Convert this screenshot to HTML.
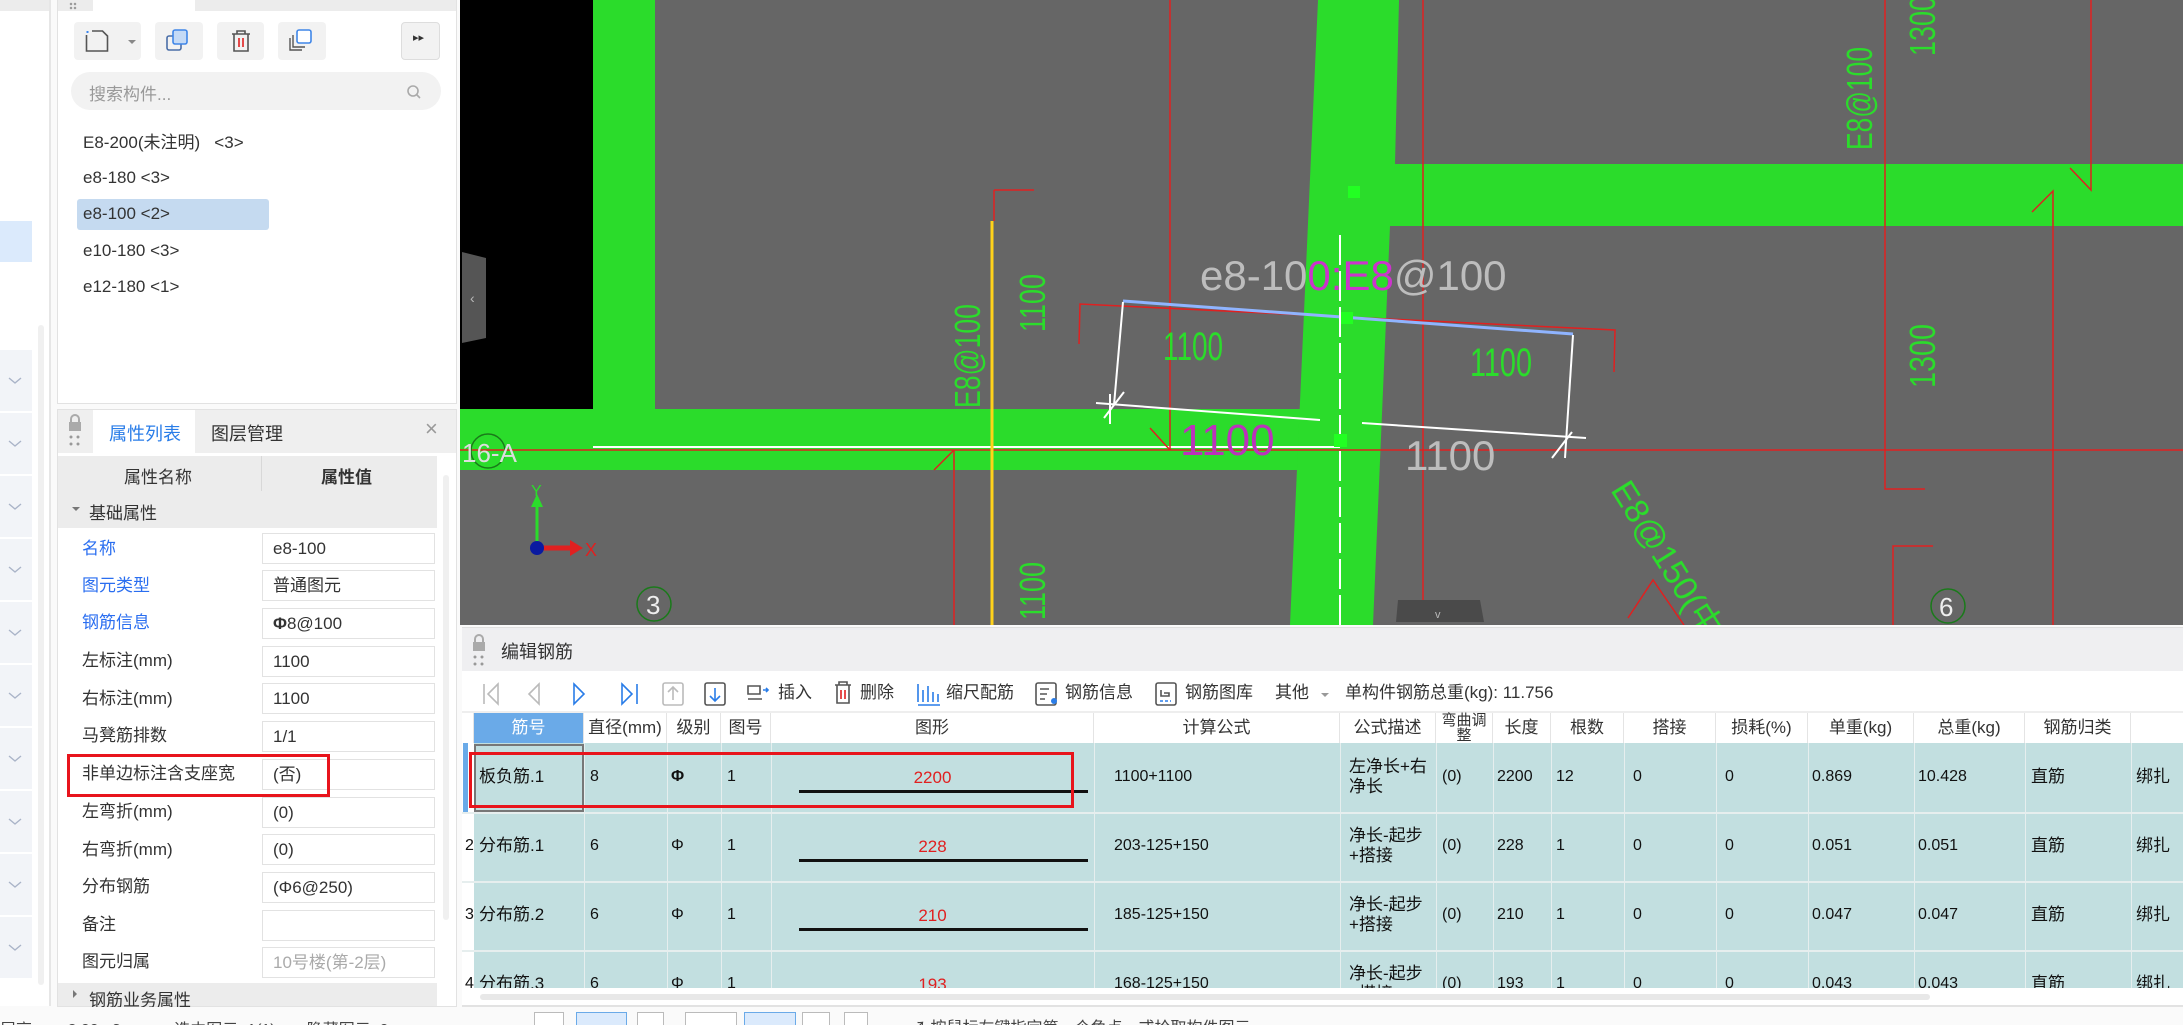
<!DOCTYPE html>
<html><head><meta charset="utf-8">
<style>
*{margin:0;padding:0;box-sizing:border-box}
body{width:2183px;height:1025px;overflow:hidden;background:#fafafa;position:relative;font-family:"Liberation Sans","Noto Sans CJK SC",sans-serif;color:#333}
.a{position:absolute}
.t{position:absolute;white-space:nowrap}
.chev{position:absolute;left:8px;width:14px;height:8px}
.btn{position:absolute;background:#f2f2f2;border-radius:4px}
.item{position:absolute;left:83px;font-size:17px;color:#333;line-height:20px}
.pl{position:absolute;left:82px;font-size:17px;color:#333;line-height:20px}
.pl.b{color:#2a6ef0}
.pv{position:absolute;left:262px;width:173px;height:31px;border:1px solid #e2e2e2;background:#fff;font-size:17px;padding-left:10px;line-height:29px}
.th{position:absolute;top:713px;height:30px;font-size:17px;color:#333;text-align:center;line-height:30px;border-right:1px solid #e4e4e4;background:#fff}
.cell{position:absolute;font-size:16px;color:#111;line-height:20px;white-space:nowrap}
.tb{position:absolute;top:682px;font-size:17px;color:#333;white-space:nowrap;line-height:22px}
</style></head><body>

<div class="a" style="left:0;top:0;width:50px;height:1006px;background:#fff"></div>
<div class="a" style="left:0;top:0;width:50px;height:11px;background:#ececec"></div>
<div class="a" style="left:0;top:221px;width:32px;height:41px;background:#dbeafc"></div>
<div class="a" style="left:38px;top:325px;width:6px;height:660px;background:#f0f0f0;border-radius:3px"></div>
<div class="a" style="left:49px;top:0;width:2px;height:1006px;background:#e6e6e6"></div>
<div id="sb"></div>

<div class="a" style="left:57px;top:0;width:400px;height:404px;background:#fff;border:1px solid #e2e2e2"></div>
<div class="a" style="left:58px;top:0;width:398px;height:11px;background:#ececec"></div>
<div class="a" style="left:93px;top:0;width:102px;height:11px;background:#fff"></div>
<div class="a" style="left:69px;top:2px;width:8px;height:8px;background:radial-gradient(circle,#999 1px,transparent 1.5px) 0 0/4px 4px"></div>
<div class="btn" style="left:74px;top:22px;width:67px;height:38px"></div>
<svg class="a" style="left:84px;top:28px" width="30" height="26"><rect x="2.5" y="3" width="2" height="2" fill="#3a86f0"/><path d="M2.5 7v16h21V8l-5-5H8" fill="none" stroke="#555" stroke-width="1.6"/></svg>
<div class="a" style="left:128px;top:40px;border:4px solid transparent;border-top-color:#888"></div>
<div class="btn" style="left:155px;top:22px;width:48px;height:38px"></div>
<svg class="a" style="left:165px;top:28px" width="28" height="26"><rect x="2" y="8" width="14" height="14" rx="2" fill="none" stroke="#4a6ea8" stroke-width="1.6"/><rect x="8" y="2" width="14" height="14" rx="2" fill="#c4daf6" stroke="#3f86e8" stroke-width="1.6"/></svg>
<div class="btn" style="left:217px;top:22px;width:47px;height:38px"></div>
<svg class="a" style="left:228px;top:28px" width="26" height="26"><path d="M4 6h18M9 6V3h8v3M6 6v17h14V6" fill="none" stroke="#555" stroke-width="1.6"/><path d="M11 10v9M15 10v9" stroke="#e02020" stroke-width="1.6"/></svg>
<div class="btn" style="left:278px;top:22px;width:48px;height:38px"></div>
<svg class="a" style="left:288px;top:28px" width="28" height="26"><path d="M2 10v12h12M5 7v12h12" fill="none" stroke="#555" stroke-width="1.4"/><rect x="9" y="2" width="14" height="13" rx="2" fill="#fff" stroke="#3f86e8" stroke-width="1.6"/></svg>
<div class="btn" style="left:401px;top:22px;width:39px;height:38px;border:1px solid #ddd"></div>
<div class="t" style="left:413px;top:31px;font-size:11px;color:#333">&#9656;&#9656;</div>
<div class="a" style="left:71px;top:72px;width:370px;height:38px;background:#f2f2f2;border-radius:19px"></div>
<div class="t" style="left:89px;top:80px;font-size:17px;color:#999">搜索构件...</div>
<svg class="a" style="left:406px;top:84px" width="16" height="16"><circle cx="7" cy="7" r="5" fill="none" stroke="#aaa" stroke-width="1.6"/><path d="M11 11l3 3" stroke="#aaa" stroke-width="1.6"/></svg>
<div class="a" style="left:77px;top:199px;width:192px;height:31px;background:#c5daf0;border-radius:3px"></div>
<div class="item" style="top:133px">E8-200(未注明)&nbsp;&nbsp;&nbsp;&lt;3&gt;</div>
<div class="item" style="top:168px">e8-180 &lt;3&gt;</div>
<div class="item" style="top:204px">e8-100 &lt;2&gt;</div>
<div class="item" style="top:241px">e10-180 &lt;3&gt;</div>
<div class="item" style="top:277px">e12-180 &lt;1&gt;</div>

<div class="a" style="left:57px;top:409px;width:400px;height:598px;background:#fff;border:1px solid #e2e2e2"></div>
<div class="a" style="left:58px;top:410px;width:398px;height:43px;background:#efefef"></div>
<div class="a" style="left:93px;top:410px;width:102px;height:43px;background:#fff"></div>
<svg class="a" style="left:68px;top:414px" width="14" height="34"><path d="M3 8V5a4 4 0 0 1 8 0v3" fill="none" stroke="#aaa" stroke-width="2"/><rect x="1" y="8" width="12" height="9" fill="#aaa"/><circle cx="3" cy="23" r="1.5" fill="#999"/><circle cx="10" cy="23" r="1.5" fill="#999"/><circle cx="3" cy="30" r="1.5" fill="#999"/><circle cx="10" cy="30" r="1.5" fill="#999"/></svg>
<div class="t" style="left:109px;top:420px;font-size:18px;color:#2a7de8">属性列表</div>
<div class="t" style="left:211px;top:420px;font-size:18px;color:#333">图层管理</div>
<div class="t" style="left:425px;top:416px;font-size:22px;color:#999">×</div>
<div class="a" style="left:58px;top:456px;width:379px;height:35px;background:#ececec"></div>
<div class="a" style="left:261px;top:456px;width:1px;height:35px;background:#d8d8d8"></div>
<div class="t" style="left:124px;top:463px;font-size:17px">属性名称</div>
<div class="t" style="left:321px;top:463px;font-size:17px;font-weight:bold">属性值</div>
<div class="a" style="left:58px;top:491px;width:379px;height:37px;background:#ececec"></div>
<div class="a" style="left:72px;top:507px;border:4px solid transparent;border-top-color:#777"></div>
<div class="t" style="left:89px;top:499px;font-size:17px">基础属性</div>
<div class="pl b" style="top:539px">名称</div><div class="pv" style="top:533px">e8-100</div>
<div class="pl b" style="top:576px">图元类型</div><div class="pv" style="top:570px">普通图元</div>
<div class="pl b" style="top:613px">钢筋信息</div><div class="pv" style="top:608px"><b>Φ</b>8@100</div>
<div class="pl" style="top:651px">左标注(mm)</div><div class="pv" style="top:646px">1100</div>
<div class="pl" style="top:689px">右标注(mm)</div><div class="pv" style="top:683px">1100</div>
<div class="pl" style="top:726px">马凳筋排数</div><div class="pv" style="top:721px">1/1</div>
<div class="pl" style="top:764px">非单边标注含支座宽</div><div class="pv" style="top:759px">(否)</div>
<div class="pl" style="top:802px">左弯折(mm)</div><div class="pv" style="top:797px">(0)</div>
<div class="pl" style="top:840px">右弯折(mm)</div><div class="pv" style="top:834px">(0)</div>
<div class="pl" style="top:877px">分布钢筋</div><div class="pv" style="top:872px">(Φ6@250)</div>
<div class="pl" style="top:915px">备注</div><div class="pv" style="top:910px"></div>
<div class="pl" style="top:952px">图元归属</div><div class="pv" style="top:947px;color:#aaa">10号楼(第-2层)</div>
<div class="a" style="left:58px;top:983px;width:379px;height:23px;background:#ececec"></div>
<div class="a" style="left:73px;top:990px;border:4px solid transparent;border-left-color:#777"></div>
<div class="t" style="left:89px;top:986px;font-size:17px">钢筋业务属性</div>
<div class="a" style="left:443px;top:475px;width:6px;height:445px;background:#f0f0f0;border-radius:3px"></div>
<div class="a" style="left:67px;top:754px;width:263px;height:43px;border:3px solid #e8141c"></div>

<svg class="a" style="left:460px;top:0" width="1723" height="625" viewBox="460 0 1723 625" font-family="Liberation Sans Narrow, Liberation Sans, sans-serif">
<rect x="460" y="0" width="1723" height="625" fill="#666"/>
<rect x="460" y="0" width="133" height="409" fill="#000"/>
<rect x="593" y="0" width="62" height="470" fill="#2bdc2b"/>
<rect x="460" y="409" width="860" height="61" fill="#2bdc2b"/>
<polygon points="1318,0 1399,0 1395,164 2183,164 2183,226 1390,226 1373,625 1290,625" fill="#2bdc2b"/>
<line x1="593" y1="447" x2="1340" y2="447" stroke="#fff" stroke-width="2"/>
<line x1="460" y1="450" x2="2183" y2="450" stroke="#e02020" stroke-width="1.5"/>
<line x1="992" y1="221" x2="992" y2="625" stroke="#ffd21a" stroke-width="3"/>
<line x1="994" y1="190" x2="1034" y2="190" stroke="#e02020" stroke-width="1.5"/>
<line x1="994" y1="190" x2="994" y2="221" stroke="#e02020" stroke-width="1.5"/>
<line x1="1170" y1="0" x2="1170" y2="450" stroke="#e02020" stroke-width="1.5"/>
<line x1="1150" y1="428" x2="1170" y2="450" stroke="#e02020" stroke-width="1.5"/>
<line x1="954" y1="450" x2="954" y2="625" stroke="#e02020" stroke-width="1.5"/>
<line x1="934" y1="470" x2="954" y2="450" stroke="#e02020" stroke-width="1.5"/>
<line x1="1423" y1="0" x2="1423" y2="600" stroke="#e02020" stroke-width="1.5"/>
<polyline points="1885,0 1885,489 1925,489" fill="none" stroke="#e02020" stroke-width="1.5"/>
<polyline points="1893,625 1893,546 1933,546" fill="none" stroke="#e02020" stroke-width="1.5"/>
<polyline points="2070,168 2091,190 2091,0" fill="none" stroke="#e02020" stroke-width="1.5"/>
<polyline points="2032,212 2053,191 2053,625" fill="none" stroke="#e02020" stroke-width="1.5"/>
<polyline points="1628,618 1653,580 1684,625" fill="none" stroke="#e02020" stroke-width="1.5"/>
<polyline points="1079,344 1080,304 1615,330 1614,372" fill="none" stroke="#e02020" stroke-width="1.5"/>
<line x1="1123" y1="301" x2="1573" y2="334" stroke="#8fb4ff" stroke-width="3"/>
<polyline points="1123,302 1114,405" fill="none" stroke="#fff" stroke-width="2"/>
<line x1="1096" y1="403" x2="1320" y2="420" stroke="#fff" stroke-width="2"/>
<line x1="1362" y1="423" x2="1586" y2="438" stroke="#fff" stroke-width="2"/>
<line x1="1573" y1="335" x2="1565" y2="458" stroke="#fff" stroke-width="2"/>
<path d="M1104 418l20 -26M1110 394v30M1552 458l20 -26" stroke="#fff" stroke-width="2"/>
<line x1="1340" y1="235" x2="1340" y2="625" stroke="#fff" stroke-width="2" stroke-dasharray="30 6"/>
<rect x="1348" y="186" width="12" height="12" fill="#2f2"/>
<rect x="1341" y="312" width="12" height="12" fill="#2f2"/>
<rect x="1334" y="434" width="13" height="13" fill="#2f2"/>
<text x="1200" y="290" font-size="42" fill="#bdbdbd">e8-10<tspan fill="#cc33cc">0:E8</tspan>@100</text>
<text x="1180" y="455" font-size="44" fill="#bb33bb">1100</text>
<text x="1405" y="470" font-size="42" fill="#bdbdbd">1100</text>
<text x="1163" y="360" font-size="40" fill="#2bdc2b" textLength="60" lengthAdjust="spacingAndGlyphs">1100</text>
<text x="1470" y="376" font-size="40" fill="#2bdc2b" textLength="62" lengthAdjust="spacingAndGlyphs">1100</text>
<g font-size="36">
<text transform="translate(980,408) rotate(-90)" fill="#2bdc2b" textLength="104" lengthAdjust="spacingAndGlyphs">E8@100</text>
<text transform="translate(1045,332) rotate(-90)" fill="#2bdc2b" textLength="58" lengthAdjust="spacingAndGlyphs">1100</text>
<text transform="translate(1045,620) rotate(-90)" fill="#2bdc2b" textLength="58" lengthAdjust="spacingAndGlyphs">1100</text>
<text transform="translate(1872,150) rotate(-90)" fill="#2bdc2b" textLength="103" lengthAdjust="spacingAndGlyphs">E8@100</text>
<text transform="translate(1935,56) rotate(-90)" fill="#2bdc2b" textLength="60" lengthAdjust="spacingAndGlyphs">1300</text>
<text transform="translate(1935,388) rotate(-90)" fill="#2bdc2b" textLength="64" lengthAdjust="spacingAndGlyphs">1300</text>
<text transform="translate(1610,490) rotate(58)" fill="#2bdc2b" font-size="34">E8@150(中距)</text>
</g>
<circle cx="488" cy="451" r="17" fill="none" stroke="#1a7a1a" stroke-width="1.5"/>
<text x="462" y="462" font-size="26" fill="#ddd">16-A</text>
<circle cx="654" cy="604" r="17" fill="none" stroke="#1a7a1a" stroke-width="1.5"/>
<text x="646" y="614" font-size="26" fill="#eee">3</text>
<circle cx="1948" cy="606" r="17" fill="none" stroke="#1a7a1a" stroke-width="1.5"/>
<text x="1939" y="616" font-size="26" fill="#eee">6</text>
<line x1="537" y1="545" x2="537" y2="505" stroke="#2bdc2b" stroke-width="3"/>
<polygon points="531,507 537,494 543,507" fill="#2bdc2b"/>
<text x="531" y="496" font-size="16" fill="#2bdc2b">Y</text>
<line x1="537" y1="548" x2="572" y2="548" stroke="#e02020" stroke-width="5"/>
<polygon points="570,540 583,548 570,556" fill="#e02020"/>
<text x="585" y="556" font-size="18" fill="#e02020">X</text>
<circle cx="537" cy="548" r="7" fill="#0a1aa0"/>
<polygon points="462,252 486,258 486,338 462,343" fill="#555"/>
<text x="470" y="303" font-size="14" fill="#bbb">‹</text>
<polygon points="1398,600 1480,600 1484,622 1396,622" fill="#4a4a4a"/>
<text x="1435" y="618" font-size="11" fill="#bbb">v</text>
</svg>

<div class="a" style="left:462px;top:627px;width:1721px;height:380px;background:#fff;border-top:1px solid #e0e0e0"></div>
<div class="a" style="left:462px;top:628px;width:1721px;height:43px;background:#efeff1"></div>
<svg class="a" style="left:472px;top:634px" width="14" height="34"><path d="M3 8V5a4 4 0 0 1 8 0v3" fill="none" stroke="#aaa" stroke-width="2"/><rect x="1" y="8" width="12" height="9" fill="#aaa"/><circle cx="3" cy="23" r="1.5" fill="#999"/><circle cx="10" cy="23" r="1.5" fill="#999"/><circle cx="3" cy="30" r="1.5" fill="#999"/><circle cx="10" cy="30" r="1.5" fill="#999"/></svg>
<div class="t" style="left:501px;top:638px;font-size:18px">编辑钢筋</div>
<svg class="a" style="left:475px;top:680px" width="900" height="28">
<g fill="none" stroke-width="1.6">
<path d="M9 4v20M23 4l-10 10 10 10z" stroke="#bbb"/>
<path d="M64 4l-10 10 10 10z" stroke="#bbb"/>
<path d="M99 4l10 10-10 10z" stroke="#2a7de8"/>
<path d="M147 4l10 10-10 10zM162 4v20" stroke="#2a7de8"/>
<rect x="188" y="3" width="20" height="22" rx="2" stroke="#bbb"/><path d="M198 20V8M193 12l5-5 5 5" stroke="#bbb"/>
<rect x="230" y="3" width="20" height="22" rx="2" stroke="#555"/><path d="M240 8v12M235 16l5 5 5-5" stroke="#2a7de8"/>
<path d="M273 6h12v8h-12zM273 19h14" stroke="#555"/><path d="M288 10h5M291 8l2 2-2 2" stroke="#2a7de8"/>
<path d="M360 5h16M364 5V2h8v3M362 5v18h12V5" stroke="#555"/><path d="M366 10v9M370 10v9" stroke="#e02020"/>
<path d="M443 4v18M448 10v12M453 6v16M458 12v10M463 14v8M443 25h22" stroke="#2a7de8"/>
<rect x="561" y="3" width="20" height="22" rx="2" stroke="#555"/><path d="M565 9h9M565 14h7M565 19h5" stroke="#555"/><circle cx="579" cy="21" r="3" fill="#2a7de8" stroke="none"/>
<rect x="681" y="3" width="20" height="22" rx="2" stroke="#555"/><path d="M686 10v6h8v-3h-5" stroke="#555"/><path d="M685 21h11" stroke="#2a7de8" stroke-dasharray="3 2"/>
</g></svg>
<div class="tb" style="left:778px">插入</div>
<div class="tb" style="left:860px">删除</div>
<div class="tb" style="left:946px">缩尺配筋</div>
<div class="tb" style="left:1065px">钢筋信息</div>
<div class="tb" style="left:1185px">钢筋图库</div>
<div class="tb" style="left:1275px">其他</div>
<div class="a" style="left:1321px;top:693px;border:4px solid transparent;border-top-color:#999"></div>
<div class="tb" style="left:1345px">单构件钢筋总重(kg): 11.756</div>

<div class="a" style="left:462px;top:711px;width:1721px;height:2px;background:#eee"></div>
<div class="th" style="left:462px;width:12px"></div>
<div class="th" style="left:474px;width:110px;background:#6aaae8;color:#fff">筋号</div>
<div class="th" style="left:584px;width:83px">直径(mm)</div>
<div class="th" style="left:667px;width:54px">级别</div>
<div class="th" style="left:721px;width:50px">图号</div>
<div class="th" style="left:771px;width:323px">图形</div>
<div class="th" style="left:1094px;width:246px">计算公式</div>
<div class="th" style="left:1340px;width:96px">公式描述</div>
<div class="th" style="left:1436px;width:57px;font-size:15px;line-height:15px">弯曲调<br>整</div>
<div class="th" style="left:1493px;width:58px">长度</div>
<div class="th" style="left:1551px;width:73px">根数</div>
<div class="th" style="left:1624px;width:92px">搭接</div>
<div class="th" style="left:1716px;width:92px">损耗(%)</div>
<div class="th" style="left:1808px;width:106px">单重(kg)</div>
<div class="th" style="left:1914px;width:111px">总重(kg)</div>
<div class="th" style="left:2025px;width:106px">钢筋归类</div>
<div class="th" style="left:2131px;width:52px;border-right:none"></div>

<div class="a" style="left:462px;top:743px;width:1721px;height:245px;background:#c2dfe0;overflow:hidden">
 <div class="a" style="left:0;top:0;width:12px;height:245px;background:#fff"></div>
 <div class="a" style="left:1px;top:0;width:5px;height:69px;background:#6aaae8"></div>
 <div class="a" style="left:0;top:69px;width:1721px;height:2px;background:#e6eeee"></div>
 <div class="a" style="left:0;top:138px;width:1721px;height:2px;background:#e6eeee"></div>
 <div class="a" style="left:0;top:207px;width:1721px;height:2px;background:#e6eeee"></div>
 <div class="a" style="left:122px;top:0;width:1px;height:245px;background:#e6eeee"></div>
 <div class="a" style="left:205px;top:0;width:1px;height:245px;background:#e6eeee"></div>
 <div class="a" style="left:259px;top:0;width:1px;height:245px;background:#e6eeee"></div>
 <div class="a" style="left:309px;top:0;width:1px;height:245px;background:#e6eeee"></div>
 <div class="a" style="left:632px;top:0;width:1px;height:245px;background:#e6eeee"></div>
 <div class="a" style="left:878px;top:0;width:1px;height:245px;background:#e6eeee"></div>
 <div class="a" style="left:974px;top:0;width:1px;height:245px;background:#e6eeee"></div>
 <div class="a" style="left:1031px;top:0;width:1px;height:245px;background:#e6eeee"></div>
 <div class="a" style="left:1089px;top:0;width:1px;height:245px;background:#e6eeee"></div>
 <div class="a" style="left:1162px;top:0;width:1px;height:245px;background:#e6eeee"></div>
 <div class="a" style="left:1254px;top:0;width:1px;height:245px;background:#e6eeee"></div>
 <div class="a" style="left:1346px;top:0;width:1px;height:245px;background:#e6eeee"></div>
 <div class="a" style="left:1452px;top:0;width:1px;height:245px;background:#e6eeee"></div>
 <div class="a" style="left:1563px;top:0;width:1px;height:245px;background:#e6eeee"></div>
 <div class="a" style="left:1669px;top:0;width:1px;height:245px;background:#e6eeee"></div>
 <div class="a" style="left:12px;top:1px;width:110px;height:68px;border:2px solid #777"></div>
</div>
<div id="rows"></div>
<div class="a" style="left:469px;top:752px;width:605px;height:56px;border:3px solid #e8141c"></div>
<div class="a" style="left:480px;top:994px;width:1450px;height:6px;background:#e8e8e8;border-radius:3px"></div>
<div class="a" style="left:462px;top:1005px;width:1721px;height:2px;background:#e2e2e2"></div>

<div class="a" style="left:0;top:1007px;width:2183px;height:18px;background:#fafafa;overflow:hidden">
 <div class="t" style="left:0;top:9px;font-size:16px;color:#444">层高 &nbsp;&nbsp;&nbsp;&nbsp;&nbsp;&nbsp; 2.00 &nbsp; 3 &nbsp;&nbsp;&nbsp;&nbsp;&nbsp;&nbsp;&nbsp;&nbsp;&nbsp;&nbsp; 选中图元: 1(1) &nbsp;&nbsp;&nbsp;&nbsp;&nbsp; 隐藏图元: 0</div>
 <div class="a" style="left:534px;top:5px;width:30px;height:20px;border:1px solid #bbb;background:#fff"></div>
 <div class="a" style="left:576px;top:5px;width:51px;height:20px;border:1px solid #6aaae8;background:#dbeafc"></div>
 <div class="a" style="left:637px;top:5px;width:27px;height:20px;border:1px solid #bbb;background:#fff"></div>
 <div class="a" style="left:685px;top:5px;width:52px;height:20px;border:1px solid #bbb;background:#fff"></div>
 <div class="a" style="left:744px;top:5px;width:52px;height:20px;border:1px solid #6aaae8;background:#dbeafc"></div>
 <div class="a" style="left:802px;top:5px;width:28px;height:20px;border:1px solid #bbb;background:#fff"></div>
 <div class="a" style="left:844px;top:5px;width:24px;height:20px;border:1px solid #bbb;background:#fff"></div>
 <div class="t" style="left:910px;top:7px;font-size:16px;color:#444">↗ 按鼠标左键指定第一个角点，或拾取构件图元</div>
</div>

<script>
var sb='';var ys=[350,413,476,539,602,665,728,791,854,917];
ys.forEach(function(y){sb+='<div class="a" style="left:0;top:'+y+'px;width:32px;height:61px;background:#f2f4f8"></div><svg class="chev" style="top:'+(y+27)+'px" viewBox="0 0 14 8"><path d="M1 1l6 5 6-5" fill="none" stroke="#aab4c8" stroke-width="1.4"/></svg>';});
document.getElementById('sb').innerHTML=sb;
var rows=[
['1','板负筋.1','8','<b>Φ</b>','1','2200','1100+1100','左净长+右<br>净长','(0)','2200','12','0','0','0.869','10.428','直筋','绑扎'],
['2','分布筋.1','6','Φ','1','228','203-125+150','净长-起步<br>+搭接','(0)','228','1','0','0','0.051','0.051','直筋','绑扎'],
['3','分布筋.2','6','Φ','1','210','185-125+150','净长-起步<br>+搭接','(0)','210','1','0','0','0.047','0.047','直筋','绑扎'],
['4','分布筋.3','6','Φ','1','193','168-125+150','净长-起步<br>+搭接','(0)','193','1','0','0','0.043','0.043','直筋','绑扎']];
var xs=[465,479,590,671,727,0,1114,1349,1442,1497,1556,1633,1725,1812,1918,2031,2136];
var h='';
rows.forEach(function(r,i){var top=743+i*69;
 r.forEach(function(v,j){
  if(j==0&&i==0)return;
  if(j==5){h+='<div class="cell" style="left:771px;width:323px;text-align:center;top:'+(top+25)+'px;color:#e02020;font-size:17px">'+v+'</div><div class="a" style="left:799px;top:'+(top+47)+'px;width:289px;height:3px;background:#111"></div>';return;}
  var t=(j==7)?top+14:top+24;var fs=(j==1||j==7||j==15||j==16)?17:16;
  h+='<div class="cell" style="left:'+xs[j]+'px;top:'+t+'px;font-size:'+fs+'px;line-height:20px">'+v+'</div>';
 });});
var d=document.getElementById('rows');d.innerHTML=h;
d.style.cssText='position:absolute;left:0;top:0;width:2183px;height:988px;overflow:hidden';
</script>
</body></html>
